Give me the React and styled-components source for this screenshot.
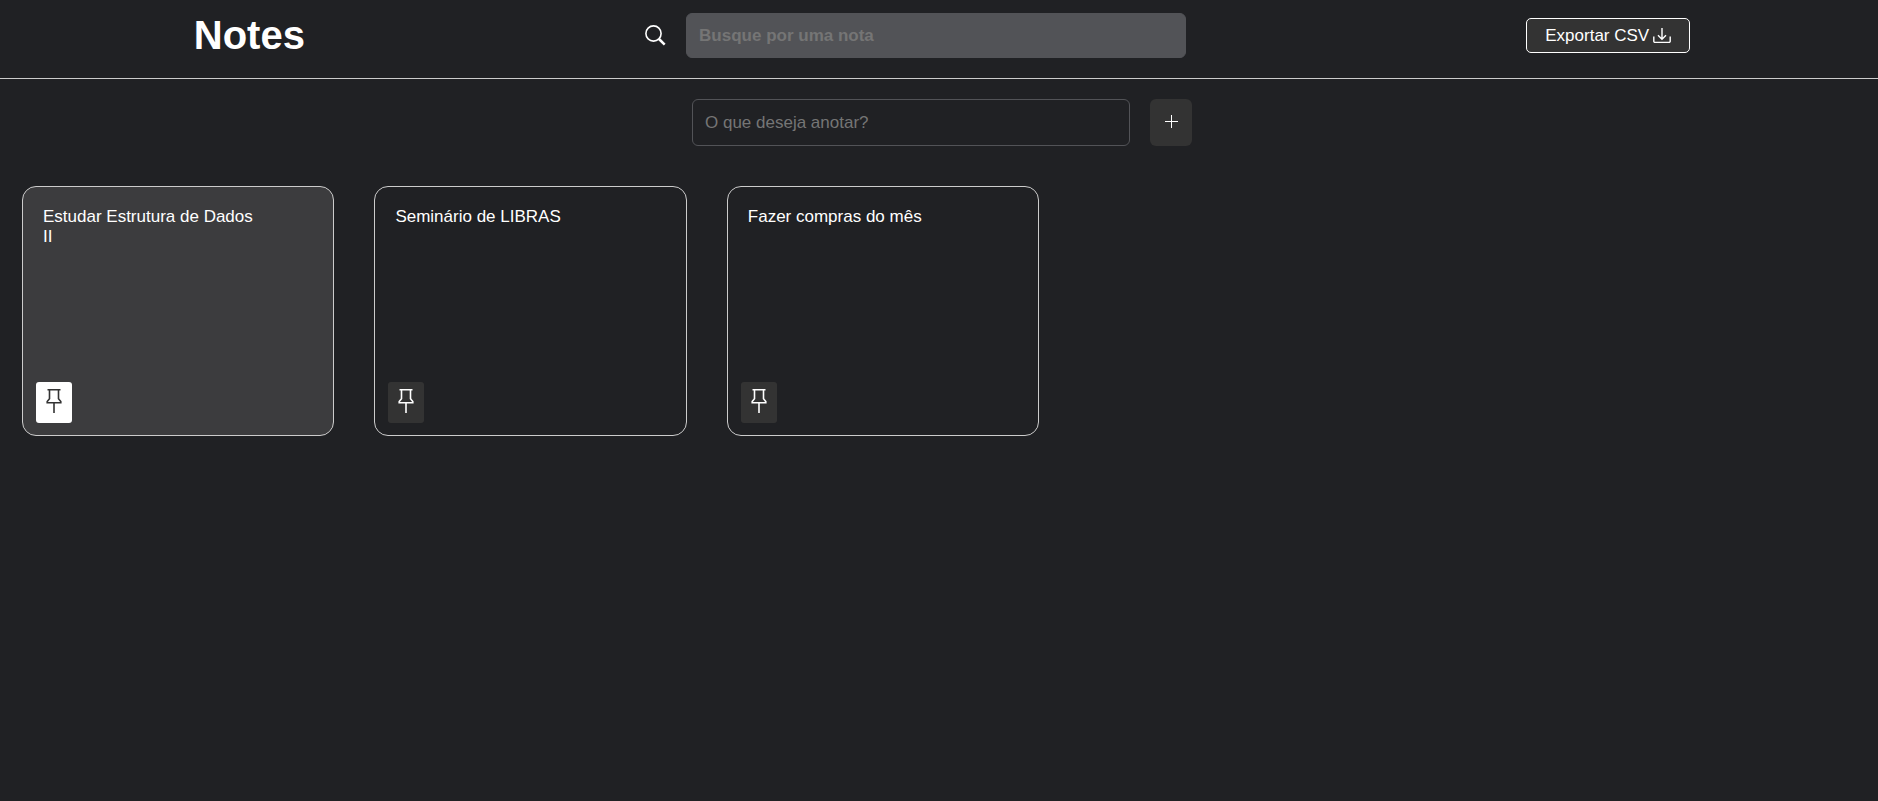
import React, { useState } from "react";
import styled, { createGlobalStyle } from "styled-components";

const GlobalStyle = createGlobalStyle`
  * { box-sizing: border-box; }
  body {
    margin: 0;
    background: #202124;
    color: #fff;
    font: 17px/20px "Liberation Sans", Arial, sans-serif;
  }
  input, button { font: inherit; color: inherit; }
  button { cursor: pointer; border: 0; }
`;

const Header = styled.header`
  display: flex;
  align-items: center;
  justify-content: space-between;
  padding: 13px 10% 20px;
  border-bottom: 1px solid #ccc;
`;

const Title = styled.h1`
  margin: 0;
  padding-left: 6px;
  font-size: 40px;
  line-height: 45px;
`;

const SearchLabel = styled.label`
  display: flex;
  align-items: center;
  gap: 20px;
`;

const TextField = styled.input`
  min-width: 0;
  padding: 0 12px;
  border: 1px solid #525357;
  border-radius: 6px;
  background: transparent;
  outline: 0;
  &::placeholder { color: #757575; opacity: 1; }
`;

const SearchField = styled(TextField)`
  width: 500px;
  height: 45px;
  background: #525357;
  font-weight: bold;
`;

const ExportButton = styled.button`
  display: flex;
  align-items: center;
  gap: 4px;
  height: 35px;
  padding: 0 18px;
  border: 1px solid #fff;
  border-radius: 5px;
  background: #333;
`;

const NoteForm = styled.form`
  display: flex;
  justify-content: center;
  gap: 20px;
  padding: 20px 0 40px 6px;
`;

const NoteField = styled(TextField)`
  width: 438px;
  height: 47px;
`;

const AddButton = styled.button`
  display: flex;
  justify-content: center;
  width: 42px;
  padding: 16px 0 0;
  border-radius: 6px;
  background: #333;
`;

const Board = styled.main`
  display: grid;
  grid-template-columns: repeat(auto-fill, minmax(300px, 1fr));
  gap: 40px;
  padding: 0 134px 40px 22px;
`;

const Note = styled.article`
  display: flex;
  flex-direction: column;
  align-items: flex-start;
  justify-content: space-between;
  min-height: 250px;
  padding: 20px 80px 12px 13px;
  border: 1px solid #ccc;
  border-radius: 14px;
  background: ${(p) => (p.$pinned ? "#3c3c3e" : "transparent")};
`;

const NoteText = styled.p`
  margin: 0;
  padding-left: 7px;
`;

const PinButton = styled.button`
  display: flex;
  justify-content: center;
  width: 36px;
  height: 41px;
  padding: 7px 0 0;
  border-radius: 3px;
  background: ${(p) => (p.$pinned ? "#fff" : "#333")};
  color: ${(p) => (p.$pinned ? "#333" : "#fff")};
`;

const Icon = styled.svg.attrs({ "aria-hidden": true })`
  flex: none;
  fill: none;
  stroke: currentColor;
`;

const SearchIcon = () => (
  <Icon width="21" height="21" viewBox="0 0 21 21">
    <circle cx="8.5" cy="8.5" r="7.6" strokeWidth="1.6" />
    <path d="M14 14l5.7 5.7" strokeWidth="2.5" />
  </Icon>
);

const DownloadIcon = () => (
  <Icon width="18" height="16" viewBox="0 0 18 16" strokeWidth="1.4">
    <path d="M.8 8.5v4.7a1.2 1.2 0 0 0 1.2 1.2h14a1.2 1.2 0 0 0 1.2-1.2V8.5" />
    <path d="M9 0v11M5 7.3l4 4 4-4" />
  </Icon>
);

const PlusIcon = () => (
  <Icon width="14" height="14" viewBox="0 0 14 14">
    <path d="M1 6.5h13M7.5 0v13" />
  </Icon>
);

const PinIcon = () => (
  <Icon width="16" height="24" viewBox="0 0 16 24" strokeWidth="1.6">
    <path d="M1.5.8h13M3.5.8v9L1.2 12.6v1.2h13.6v-1.2l-2.3-2.8v-9M8 13.8V24" />
  </Icon>
);

const initialNotes = [
  { id: 1, text: "Estudar Estrutura de Dados II", pinned: true },
  { id: 2, text: "Seminário de LIBRAS", pinned: false },
  { id: 3, text: "Fazer compras do mês", pinned: false },
];

export default function App() {
  const [notes, setNotes] = useState(initialNotes);
  const [query, setQuery] = useState("");
  const [draft, setDraft] = useState("");

  const addNote = (event) => {
    event.preventDefault();
    if (!draft.trim()) return;
    setNotes([...notes, { id: Date.now(), text: draft, pinned: false }]);
    setDraft("");
  };

  const togglePin = (id) =>
    setNotes(notes.map((n) => (n.id === id ? { ...n, pinned: !n.pinned } : n)));

  return (
    <>
      <GlobalStyle />
      <Header>
        <Title>Notes</Title>
        <SearchLabel>
          <SearchIcon />
          <SearchField
            aria-label="Busque por uma nota"
            placeholder="Busque por uma nota"
            value={query}
            onChange={(e) => setQuery(e.target.value)}
          />
        </SearchLabel>
        <ExportButton type="button">
          Exportar CSV <DownloadIcon />
        </ExportButton>
      </Header>
      <NoteForm onSubmit={addNote}>
        <NoteField
          aria-label="O que deseja anotar?"
          placeholder="O que deseja anotar?"
          value={draft}
          onChange={(e) => setDraft(e.target.value)}
        />
        <AddButton type="submit" aria-label="Adicionar nota">
          <PlusIcon />
        </AddButton>
      </NoteForm>
      <Board>
        {notes
          .filter((n) => n.text.toLowerCase().includes(query.toLowerCase()))
          .map((n) => (
            <Note key={n.id} $pinned={n.pinned}>
              <NoteText>{n.text}</NoteText>
              <PinButton
                type="button"
                $pinned={n.pinned}
                aria-label="Fixar nota"
                aria-pressed={n.pinned}
                onClick={() => togglePin(n.id)}
              >
                <PinIcon />
              </PinButton>
            </Note>
          ))}
      </Board>
    </>
  );
}
